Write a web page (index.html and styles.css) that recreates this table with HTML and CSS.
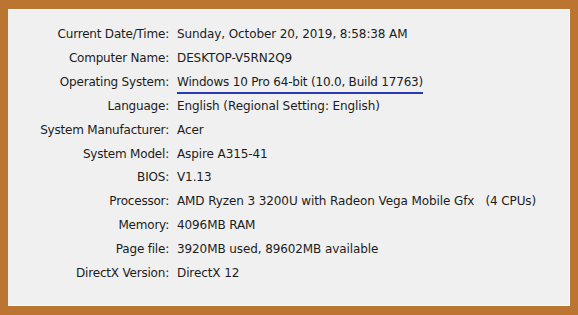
FILE: index.html
```html
<!DOCTYPE html>
<html lang="en">
<head>
    <meta charset="UTF-8">
    <meta name="viewport" content="width=device-width, initial-scale=1.0">
    <title>System Information</title>
    <link rel="stylesheet" href="styles.css">
</head>
<body>
    <div class="panel">
        <dl class="sysinfo">
            <dt>Current Date/Time:</dt>
            <dd>Sunday, October 20, 2019, 8:58:38 AM</dd>
            <dt>Computer Name:</dt>
            <dd>DESKTOP-V5RN2Q9</dd>
            <dt>Operating System:</dt>
            <dd><span class="marked">Windows 10 Pro 64-bit (10.0, Build 17763)</span></dd>
            <dt>Language:</dt>
            <dd>English (Regional Setting: English)</dd>
            <dt>System Manufacturer:</dt>
            <dd>Acer</dd>
            <dt>System Model:</dt>
            <dd>Aspire A315-41</dd>
            <dt>BIOS:</dt>
            <dd>V1.13</dd>
            <dt>Processor:</dt>
            <dd>AMD Ryzen 3 3200U with Radeon Vega Mobile Gfx   (4 CPUs)</dd>
            <dt>Memory:</dt>
            <dd>4096MB RAM</dd>
            <dt>Page file:</dt>
            <dd>3920MB used, 89602MB available</dd>
            <dt>DirectX Version:</dt>
            <dd>DirectX 12</dd>
        </dl>
    </div>
</body>
</html>
```
FILE: styles.css
```css
body {
    margin: 0;
    padding: 9px 8px 8px 8px;
    background-color: #bc7431;
    font-family: "DejaVu Sans", sans-serif;
    font-size: 12px;
    color: #1c1c1c;
}
.panel {
    height: 297px;
    box-sizing: border-box;
    background: #f0f0f0;
    border-top: 1px solid #fff;
    border-right: 1px solid #fff;
    border-bottom: 1px solid #fff;
    padding-top: 13px;
}
.sysinfo {
    display: grid;
    grid-template-columns: 161px auto;
    column-gap: 8px;
    margin: 0;
}
.sysinfo dt,
.sysinfo dd {
    margin: 0;
    line-height: 23.9px;
    white-space: pre;
    letter-spacing: -0.1px;
}
.sysinfo dt {
    text-align: right;
    letter-spacing: -0.2px;
}
.marked {
    display: inline-block;
    line-height: 19px;
    border-bottom: 2px solid #2a3ab4;
    letter-spacing: -0.2px;
}
```
